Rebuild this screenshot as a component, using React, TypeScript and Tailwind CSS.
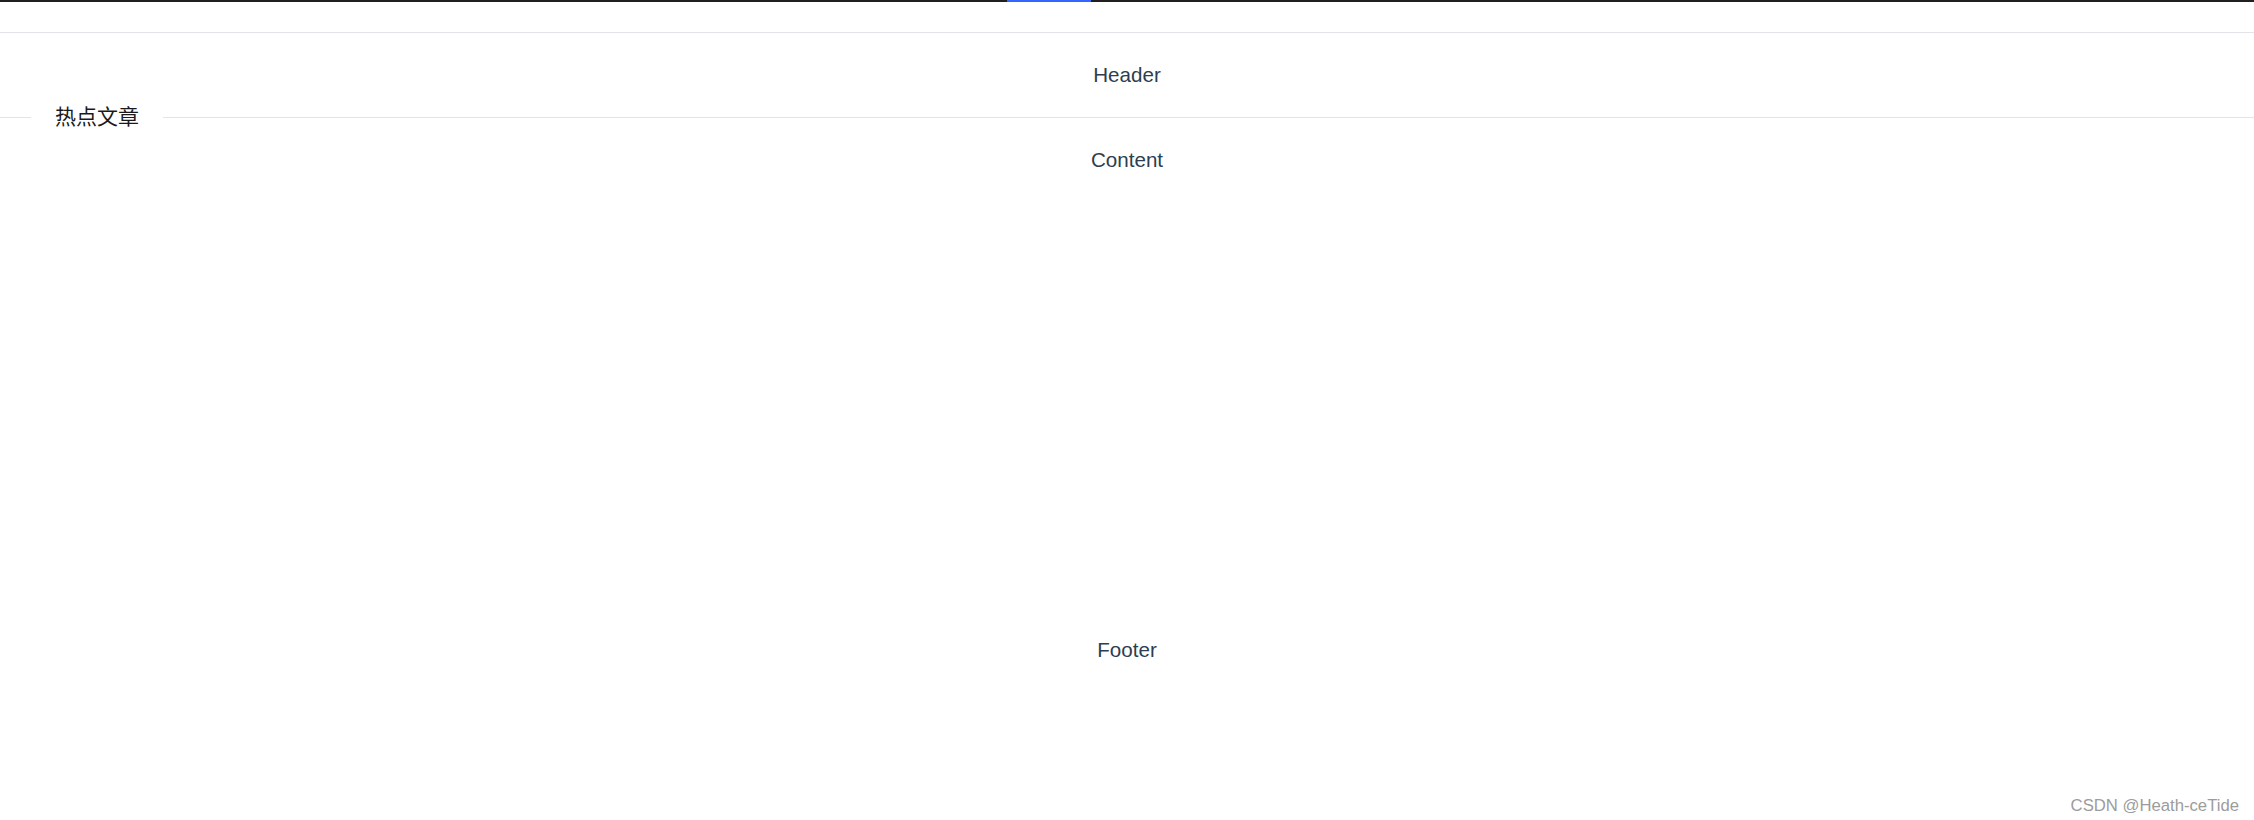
export default function App() {
  const font = { fontFamily: '"Liberation Sans", "Noto Sans CJK SC", Arial, sans-serif' };

  return (
    <div className="w-[2254px] h-[820px] bg-white flex flex-col overflow-hidden" style={font}>
      {/* progress bar */}
      <div className="h-[2px] flex bg-[#1f1f1f]">
        <div className="w-[1007px]" />
        <div className="w-[84px] bg-[#3366ff]" />
      </div>
      <div className="h-[31px] border-b border-[#e4e4e8]" />

      {/* header */}
      <div className="h-[72px] pt-[30px] text-center text-[20.6px] leading-[24px] text-[#2c3e50]">
        Header
      </div>

      {/* divider */}
      <div className="h-[25px] flex items-center">
        <div className="w-[31px] h-px bg-[#e4e4e8]" />
        <span className="px-6 pb-[2px] text-[21px] leading-[25px] text-[#1a1a1a]">热点文章</span>
        <div className="flex-1 h-px bg-[#e4e4e8]" />
      </div>

      {/* content */}
      <div className="h-[508px] pt-[18px] text-center text-[20.6px] leading-[24px] text-[#2c3e50]">
        Content
      </div>

      {/* footer */}
      <div className="h-[24px] text-center text-[20.6px] leading-[24px] text-[#2c3e50]">
        Footer
      </div>

      <div className="h-[134px]" />
      <div className="flex justify-end pr-[15px] text-[16.7px] leading-[20px] text-[#9c9c9c]">
        CSDN @Heath-ceTide
      </div>
    </div>
  );
}
